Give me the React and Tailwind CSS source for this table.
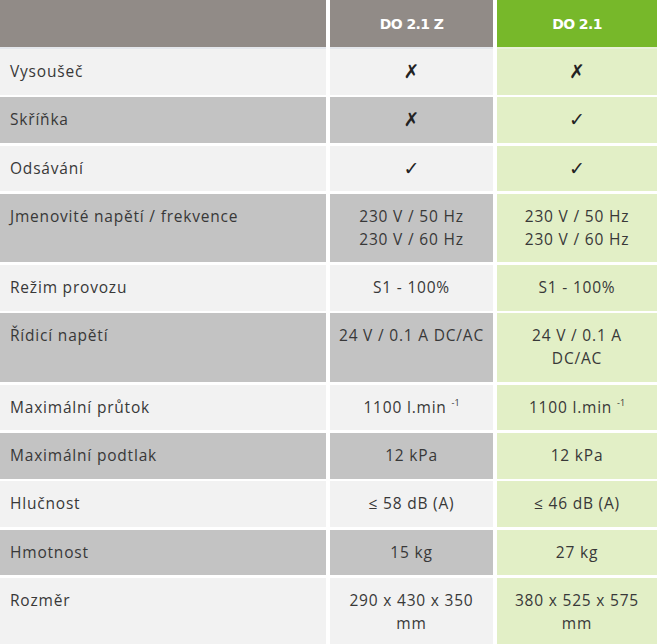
import React from "react";

const rows = [
  ["Vysoušeč", "✗", "✗", true],
  ["Skříňka", "✗", "✓", true],
  ["Odsávání", "✓", "✓", true],
  ["Jmenovité napětí / frekvence", "230 V / 50 Hz\n230 V / 60 Hz", "230 V / 50 Hz\n230 V / 60 Hz"],
  ["Režim provozu", "S1 - 100%", "S1 - 100%"],
  ["Řídicí napětí", "24 V / 0.1 A DC/AC", "24 V / 0.1 A\nDC/AC"],
  ["Maximální průtok", "SUP", "SUP"],
  ["Maximální podtlak", "12 kPa", "12 kPa"],
  ["Hlučnost", "≤ 58 dB (A)", "≤ 46 dB (A)"],
  ["Hmotnost", "15 kg", "27 kg"],
  ["Rozměr", "290 x 430 x 350\nmm", "380 x 525 x 575\nmm"],
];

function Val({ v, sym }) {
  if (v === "SUP") {
    return (
      <div className="h-[23px] whitespace-nowrap">
        1100 l.min <span className="text-[9px] leading-[9px] relative -top-[7px] tracking-normal">-1</span>
      </div>
    );
  }
  if (sym) {
    return <div className="h-[23px] font-['DejaVu_Sans',sans-serif] text-[19px] leading-[23px] font-bold text-[#222] tracking-normal">{v}</div>;
  }
  return v.split("\n").map((l, i) => <div key={i} className="h-[23px] whitespace-nowrap">{l}</div>);
}

export default function App() {
  return (
    <div className="w-[657px] h-[644px] overflow-hidden bg-white font-['Open_Sans',sans-serif] text-[15.5px] leading-[23px] text-[#383838] tracking-[0.8px]">
      <div className="grid grid-cols-[326px_163px_160px] gap-x-[4px]">
        <div className="h-[49px] bg-[#918b87] border-b-2 border-[#e4e7ec]" />
        <div className="h-[49px] bg-[#918b87] border-b-2 border-[#e4e7ec] flex items-center justify-center text-white font-bold font-['DejaVu_Sans',sans-serif] text-[14px] pt-[1px] tracking-[-0.6px]">
          DO 2.1 Z
        </div>
        <div className="h-[49px] bg-[#77b82a] border-b-2 border-[#e9f2d8] flex items-center justify-center text-white font-bold font-['DejaVu_Sans',sans-serif] text-[14px] pt-[1px] tracking-[-0.6px]">
          DO 2.1
        </div>
      </div>
      <div className="grid grid-cols-[326px_163px_160px] gap-x-[4px] gap-y-[2.8px]">
        {rows.map(([label, a, b, sym], i) => {
          const dark = i % 2 === 1;
          const base = dark ? "bg-[#c3c3c3]" : "bg-[#f2f2f2]";
          return (
            <React.Fragment key={i}>
              <div className={`${base} pl-[10px] pt-[11px] pb-[11.5px]`}>
                <div className="h-[23px]">{label}</div>
              </div>
              <div className={`${base} text-center pt-[11px] pb-[11.5px]`}>
                <Val v={a} sym={sym} />
              </div>
              <div className="bg-[#e2efc6] text-center pt-[11px] pb-[11.5px]">
                <Val v={b} sym={sym} />
              </div>
            </React.Fragment>
          );
        })}
      </div>
    </div>
  );
}
